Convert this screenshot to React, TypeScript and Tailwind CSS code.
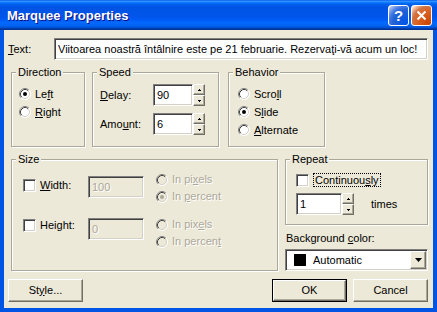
import React from "react";

const sunken =
  "border border-t-[#808080] border-l-[#808080] border-b-white border-r-white shadow-[inset_1px_1px_0_#404040,inset_-1px_-1px_0_#d4d0c8]";
const raised =
  "border border-t-white border-l-white border-b-[#716f64] border-r-[#716f64] shadow-[inset_-1px_-1px_0_#aca899]";
const etched = "border border-[#aca899] shadow-[inset_1px_1px_0_#fff,1px_1px_0_#fff]";
const dim = "text-[#aca899] [text-shadow:1px_1px_0_#fff]";

function U({ children }: { children: React.ReactNode }) {
  return <span className="underline underline-offset-[1px]">{children}</span>;
}

function Radio({ checked = false, disabled = false }: { checked?: boolean; disabled?: boolean }) {
  return (
    <svg width="12" height="12" viewBox="0 0 12 12" className="shrink-0">
      <circle cx="6" cy="6" r="5.5" fill={disabled ? "#ece9d8" : "#fff"} />
      <path d="M2.11 9.89A5.5 5.5 0 0 1 9.89 2.11" fill="none" stroke="#808080" />
      <path d="M2.82 9.18A4.5 4.5 0 0 1 9.18 2.82" fill="none" stroke="#404040" />
      <path d="M9.89 2.11A5.5 5.5 0 0 1 2.11 9.89" fill="none" stroke="#fff" />
      <path d="M9.18 2.82A4.5 4.5 0 0 1 2.82 9.18" fill="none" stroke="#d4d0c8" />
      {checked && <circle cx="6" cy="6" r="2" fill={disabled ? "#aca899" : "#000"} />}
    </svg>
  );
}

function Check() {
  return <div className={`w-[13px] h-[13px] shrink-0 bg-white ${sunken}`} />;
}

function SpinBtn({ up = false }: { up?: boolean }) {
  return (
    <div className={`flex-1 flex items-center justify-center bg-[#ece9d8] ${raised}`}>
      <svg width="3" height="2" viewBox="0 0 3 2">
        <path d={up ? "M1 0h1v1h1v1H0V1h1z" : "M0 0h3v1H2v1H1V1H0z"} fill="#000" />
      </svg>
    </div>
  );
}

function Spin() {
  return (
    <div className="flex flex-col w-[12px] h-[22px]">
      <SpinBtn up />
      <SpinBtn />
    </div>
  );
}

function Group({ title, className, children }: { title: string; className: string; children?: React.ReactNode }) {
  return (
    <fieldset className={`${etched} ${className}`}>
      <legend className="ml-[4px] px-[2px] leading-[13px] bg-[#ece9d8]">{title}</legend>
      {children}
    </fieldset>
  );
}

function Button({ children, def = false, className = "" }: { children: React.ReactNode; def?: boolean; className?: string }) {
  if (def) {
    return (
      <div className={`w-[75px] h-[23px] border border-black ${className}`}>
        <div className={`w-full h-full flex items-center justify-center bg-[#ece9d8] ${raised}`}>{children}</div>
      </div>
    );
  }
  return (
    <div className={`w-[75px] h-[23px] flex items-center justify-center bg-[#ece9d8] ${raised} ${className}`}>
      {children}
    </div>
  );
}

export default function App() {
  return (
    <div className="w-[437px] h-[312px] flex flex-col bg-[#0054e3] font-['Liberation_Sans',Arial,sans-serif] text-[11px] leading-[13px] text-black select-none">
      {/* title bar */}
      <div className="h-[30px] shrink-0 flex items-center pl-[7px] pr-[5px] bg-[linear-gradient(to_bottom,#0058ee_0%,#3593ff_4%,#288eff_6%,#127dff_8%,#036ffc_10%,#0262ee_14%,#0057e5_20%,#0054e3_24%,#0055eb_56%,#005bf5_66%,#026afe_76%,#0062ef_86%,#0052d6_92%,#0040ab_94%,#003092_100%)]">
        <span className="font-bold text-[13px] text-white [text-shadow:1px_1px_0_#0f1089] pt-[1px]">
          Marquee Properties
        </span>
        <div className="ml-auto flex gap-[2px]">
          <div className="w-[21px] h-[21px] rounded-[3px] border border-white flex items-center justify-center bg-[radial-gradient(circle_at_90%_90%,#0054e9_0%,#2263d5_55%,#4479e4_70%,#a3bbec_90%,#fff_100%)]">
            <span className="text-white font-bold text-[15px] leading-none">?</span>
          </div>
          <div className="w-[21px] h-[21px] rounded-[3px] border border-white flex items-center justify-center bg-[radial-gradient(circle_at_90%_90%,#cc4600_0%,#dc6527_55%,#cd7546_70%,#ffccb2_90%,#fff_100%)]">
            <svg width="11" height="11" viewBox="0 0 11 11">
              <path d="M1.5 1.5L9.5 9.5M9.5 1.5L1.5 9.5" stroke="#fff" strokeWidth="2" />
            </svg>
          </div>
        </div>
      </div>

      {/* client area */}
      <div className="flex-1 mx-[4px] mb-[4px] bg-[#ece9d8] flex flex-col">
        {/* text row */}
        <div className="flex items-center mt-[8px]">
          <span className="ml-[4px] w-[46px]">
            <U>T</U>ext:
          </span>
          <div className={`w-[374px] h-[22px] bg-white flex items-center pl-[3px] whitespace-nowrap overflow-hidden ${sunken}`}>
            Viitoarea noastră întâlnire este pe 21 februarie. Rezervaţi-vă acum un loc!
          </div>
        </div>

        {/* direction / speed / behavior */}
        <div className="flex mt-[6px]">
          <Group title="Direction" className="ml-[7px] w-[74px] h-[81px]">
            <div className="mt-[6px] flex flex-col">
              <label className="h-[18px] flex items-center gap-[4px] ml-[7px]">
                <Radio checked />
                <span>
                  Le<U>f</U>t
                </span>
              </label>
              <label className="h-[18px] flex items-center gap-[4px] ml-[7px]">
                <Radio />
                <span>
                  <U>R</U>ight
                </span>
              </label>
            </div>
          </Group>

          <Group title="Speed" className="ml-[7px] w-[127px] h-[81px]">
            <div className="mt-[5px] flex flex-col gap-[7px]">
              <div className="flex items-center ml-[7px]">
                <span className="w-[53px]">
                  <U>D</U>elay:
                </span>
                <div className={`w-[40px] h-[22px] bg-white flex items-center pl-[3px] ${sunken}`}>90</div>
                <Spin />
              </div>
              <div className="flex items-center ml-[7px]">
                <span className="w-[53px]">
                  Amo<U>u</U>nt:
                </span>
                <div className={`w-[40px] h-[22px] bg-white flex items-center pl-[3px] ${sunken}`}>6</div>
                <Spin />
              </div>
            </div>
          </Group>

          <Group title="Behavior" className="ml-[9px] w-[97px] h-[81px]">
            <div className="mt-[6px] flex flex-col ml-[9px]">
              <label className="h-[18px] flex items-center gap-[4px]">
                <Radio />
                <span>
                  Scro<U>l</U>l
                </span>
              </label>
              <label className="h-[18px] flex items-center gap-[4px]">
                <Radio checked />
                <span>
                  S<U>l</U>ide
                </span>
              </label>
              <label className="h-[18px] flex items-center gap-[4px]">
                <Radio />
                <span>
                  <U>A</U>lternate
                </span>
              </label>
            </div>
          </Group>
        </div>

        {/* size / repeat / background */}
        <div className="flex mt-[6px]">
          <Group title="Size" className="ml-[7px] w-[267px] h-[118px]">
            <div className="flex items-start mt-[5px] pl-[11px]">
              <div className="w-[65px] h-[13px] mt-[8px] flex items-center gap-[4px]">
                <Check />
                <span>
                  <U>W</U>idth:
                </span>
              </div>
              <div className={`w-[56px] h-[22px] mt-[5px] bg-[#ece9d8] flex items-center pl-[3px] ${sunken} ${dim}`}>
                100
              </div>
              <div className={`ml-[12px] flex flex-col ${dim}`}>
                <div className="h-[17px] flex items-center gap-[4px]">
                  <Radio disabled />
                  <span>
                    In pi<U>x</U>els
                  </span>
                </div>
                <div className="h-[17px] flex items-center gap-[4px]">
                  <Radio disabled checked />
                  <span>
                    In <U>p</U>ercent
                  </span>
                </div>
              </div>
            </div>
            <div className="flex items-start mt-[11px] pl-[11px]">
              <div className="w-[65px] h-[13px] mt-[3px] flex items-center gap-[4px]">
                <Check />
                <span>
                  Hei<U>g</U>ht:
                </span>
              </div>
              <div className={`w-[56px] h-[22px] mt-[2px] bg-[#ece9d8] flex items-center pl-[3px] ${sunken} ${dim}`}>
                0
              </div>
              <div className={`ml-[12px] flex flex-col ${dim}`}>
                <div className="h-[17px] flex items-center gap-[4px]">
                  <Radio disabled />
                  <span>
                    In pix<U>e</U>ls
                  </span>
                </div>
                <div className="h-[17px] flex items-center gap-[4px]">
                  <Radio disabled />
                  <span>
                    In percen<U>t</U>
                  </span>
                </div>
              </div>
            </div>
          </Group>

          <div className="ml-[7px] w-[143px] flex flex-col">
            <Group title="Repeat" className="w-[143px] h-[72px]">
              <div className="mt-[7px] ml-[10px] flex items-center">
                <Check />
                <span className="ml-[4px] h-[14px] px-[1px] flex items-center border border-dotted border-black">
                  Continuou<U>s</U>ly
                </span>
              </div>
              <div className="mt-[6px] ml-[10px] flex items-center">
                <div className={`w-[46px] h-[22px] bg-white flex items-center pl-[3px] ${sunken}`}>1</div>
                <Spin />
                <span className="ml-[17px]">times</span>
              </div>
            </Group>
            <span className="mt-[7px] ml-[1px]">
              Background <U>c</U>olor:
            </span>
            <div className={`mt-[4px] w-[143px] h-[22px] bg-white flex items-center ${sunken}`}>
              <div className="ml-[8px] w-[12px] h-[12px] bg-black" />
              <span className="ml-[7px]">Automatic</span>
              <div className={`ml-auto mr-[1px] w-[16px] h-[18px] flex items-center justify-center bg-[#ece9d8] ${raised}`}>
                <svg width="7" height="4" viewBox="0 0 7 4">
                  <path d="M0 0h7L3.5 4z" fill="#000" />
                </svg>
              </div>
            </div>
          </div>
        </div>

        {/* buttons */}
        <div className="flex mt-[8px]">
          <Button className="ml-[4px]">
            St<U>y</U>le...
          </Button>
          <Button def className="ml-auto">
            OK
          </Button>
          <Button className="ml-[6px] mr-[5px]">Cancel</Button>
        </div>
      </div>
    </div>
  );
}
